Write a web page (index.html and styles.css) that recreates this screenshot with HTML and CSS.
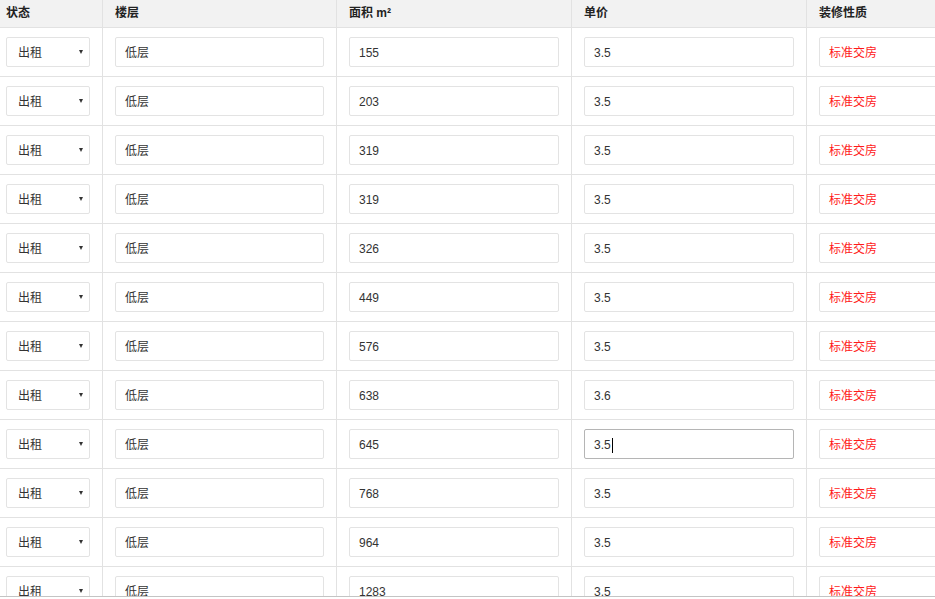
FILE: index.html
```html
<!DOCTYPE html>
<html lang="zh">
<head>
<meta charset="utf-8">
<title>房源列表</title>
<link rel="stylesheet" href="styles.css">
</head>
<body>
<div class="frame">
  <div class="grid">
    <div class="th c1">状态</div>
    <div class="th">楼层</div>
    <div class="th">面积 m²</div>
    <div class="th">单价</div>
    <div class="th">装修性质</div>

    <div class="td c1"><div class="sel">出租<i class="arr"></i></div></div>
    <div class="td"><div class="inp">低层</div></div>
    <div class="td"><div class="inp">155</div></div>
    <div class="td"><div class="inp">3.5</div></div>
    <div class="td"><div class="inp red">标准交房</div></div>

    <div class="td c1"><div class="sel">出租<i class="arr"></i></div></div>
    <div class="td"><div class="inp">低层</div></div>
    <div class="td"><div class="inp">203</div></div>
    <div class="td"><div class="inp">3.5</div></div>
    <div class="td"><div class="inp red">标准交房</div></div>

    <div class="td c1"><div class="sel">出租<i class="arr"></i></div></div>
    <div class="td"><div class="inp">低层</div></div>
    <div class="td"><div class="inp">319</div></div>
    <div class="td"><div class="inp">3.5</div></div>
    <div class="td"><div class="inp red">标准交房</div></div>

    <div class="td c1"><div class="sel">出租<i class="arr"></i></div></div>
    <div class="td"><div class="inp">低层</div></div>
    <div class="td"><div class="inp">319</div></div>
    <div class="td"><div class="inp">3.5</div></div>
    <div class="td"><div class="inp red">标准交房</div></div>

    <div class="td c1"><div class="sel">出租<i class="arr"></i></div></div>
    <div class="td"><div class="inp">低层</div></div>
    <div class="td"><div class="inp">326</div></div>
    <div class="td"><div class="inp">3.5</div></div>
    <div class="td"><div class="inp red">标准交房</div></div>

    <div class="td c1"><div class="sel">出租<i class="arr"></i></div></div>
    <div class="td"><div class="inp">低层</div></div>
    <div class="td"><div class="inp">449</div></div>
    <div class="td"><div class="inp">3.5</div></div>
    <div class="td"><div class="inp red">标准交房</div></div>

    <div class="td c1"><div class="sel">出租<i class="arr"></i></div></div>
    <div class="td"><div class="inp">低层</div></div>
    <div class="td"><div class="inp">576</div></div>
    <div class="td"><div class="inp">3.5</div></div>
    <div class="td"><div class="inp red">标准交房</div></div>

    <div class="td c1"><div class="sel">出租<i class="arr"></i></div></div>
    <div class="td"><div class="inp">低层</div></div>
    <div class="td"><div class="inp">638</div></div>
    <div class="td"><div class="inp">3.6</div></div>
    <div class="td"><div class="inp red">标准交房</div></div>

    <div class="td c1"><div class="sel">出租<i class="arr"></i></div></div>
    <div class="td"><div class="inp">低层</div></div>
    <div class="td"><div class="inp">645</div></div>
    <div class="td"><div class="inp focus">3.5<span class="caret"></span></div></div>
    <div class="td"><div class="inp red">标准交房</div></div>

    <div class="td c1"><div class="sel">出租<i class="arr"></i></div></div>
    <div class="td"><div class="inp">低层</div></div>
    <div class="td"><div class="inp">768</div></div>
    <div class="td"><div class="inp">3.5</div></div>
    <div class="td"><div class="inp red">标准交房</div></div>

    <div class="td c1"><div class="sel">出租<i class="arr"></i></div></div>
    <div class="td"><div class="inp">低层</div></div>
    <div class="td"><div class="inp">964</div></div>
    <div class="td"><div class="inp">3.5</div></div>
    <div class="td"><div class="inp red">标准交房</div></div>

    <div class="td c1"><div class="sel">出租<i class="arr"></i></div></div>
    <div class="td"><div class="inp">低层</div></div>
    <div class="td"><div class="inp">1283</div></div>
    <div class="td"><div class="inp">3.5</div></div>
    <div class="td"><div class="inp red">标准交房</div></div>
  </div>
</div>
</body>
</html>
```

FILE: styles.css
```css
html, body {
  margin: 0;
  padding: 0;
  background: #fff;
}
body {
  font-family: "Liberation Sans", "Noto Sans CJK SC", sans-serif;
  font-size: 12px;
  color: #333;
}
.frame {
  height: 596px;
  overflow: hidden;
  border-bottom: 1px solid #c4c4c4;
}
.grid {
  display: grid;
  grid-template-columns: 103px 234px 235px 235px 235px;
  grid-auto-rows: 49px;
  grid-template-rows: 28px;
  width: 1042px;
}
.th, .td {
  box-sizing: border-box;
  border-right: 1px solid #e2e2e2;
  border-bottom: 1px solid #e2e2e2;
  padding: 0 12px;
}
.th {
  background: #f2f2f2;
  font-weight: bold;
  line-height: 26px;
  color: #222;
}
.td {
  padding-top: 9px;
  padding-bottom: 9px;
}
.c1 {
  padding-left: 6px;
}
.sel, .inp {
  box-sizing: border-box;
  height: 30px;
  border: 1px solid #e3e3e3;
  border-radius: 2px;
  background: #fff;
  line-height: 28px;
  color: #333;
  display: flex;
  align-items: center;
  padding-top: 2px;
}
.sel {
  width: 84px;
  padding-left: 11px;
  position: relative;
}
.arr {
  position: absolute;
  left: 72px;
  top: 12px;
  width: 0;
  height: 0;
  border-left: 2px solid transparent;
  border-right: 2px solid transparent;
  border-top: 4px solid #333;
}
.inp {
  width: 100%;
  padding-left: 9px;
}
.inp.red {
  color: #ff1a1a;
}
.inp.focus {
  border-color: #b5b5b5;
}
.caret {
  display: inline-block;
  width: 1px;
  height: 15px;
  background: #000;
  margin-left: 1px;
}
```
